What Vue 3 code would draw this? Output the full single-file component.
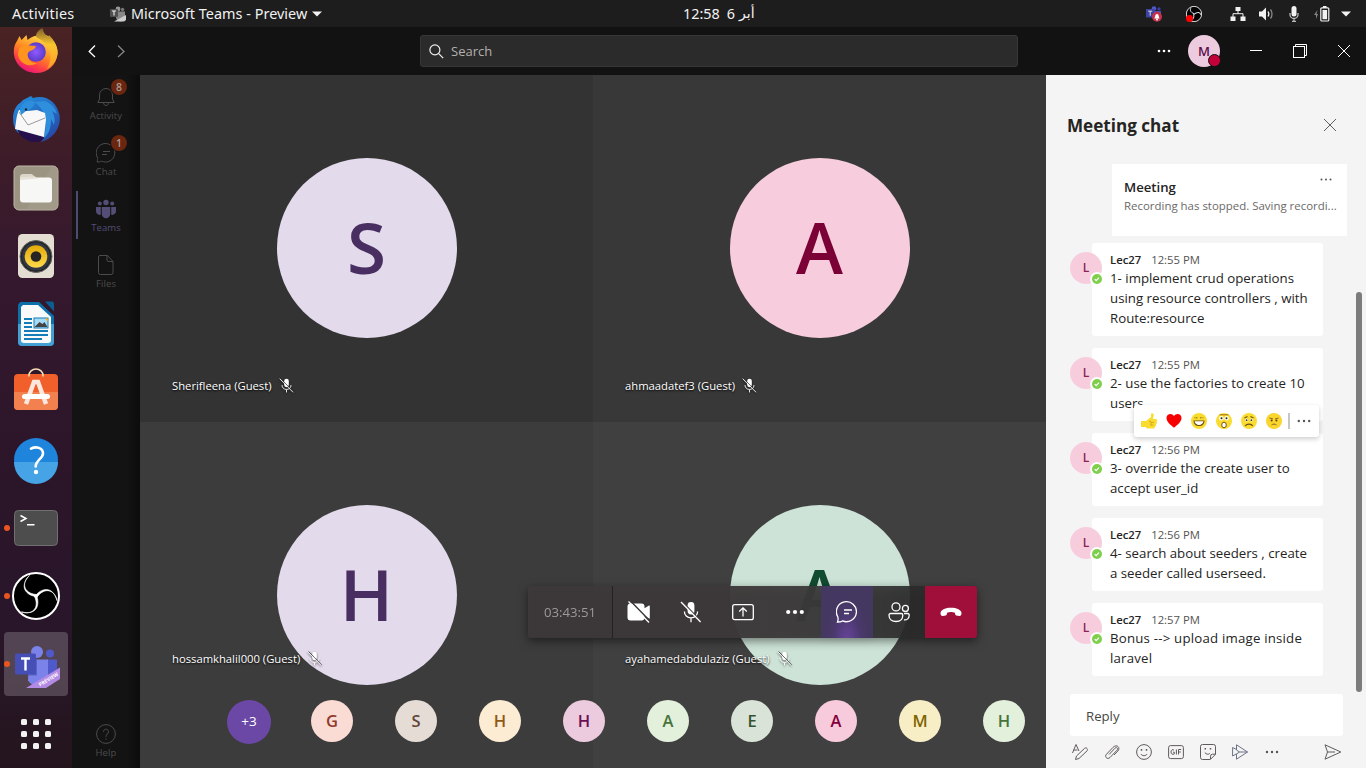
<script setup>
const tiles = [
  { letter: 'S', name: 'Sherifleena (Guest)', cls: 't1' },
  { letter: 'A', name: 'ahmaadatef3 (Guest)', cls: 't2' },
  { letter: 'H', name: 'hossamkhalil000 (Guest)', cls: 't3' },
  { letter: 'A', name: 'ayahamedabdulaziz (Guest)', cls: 't4' }
]
const others = [
  { l: 'G', bg: '#fbdcd4', fg: '#8e3a2b' },
  { l: 'S', bg: '#e6dcd6', fg: '#5f4438' },
  { l: 'H', bg: '#fcecd3', fg: '#8f5a14' },
  { l: 'H', bg: '#edcbdf', fg: '#6b0f52' },
  { l: 'A', bg: '#e2f0dc', fg: '#47733a' },
  { l: 'E', bg: '#d9e3d7', fg: '#35522f' },
  { l: 'A', bg: '#f7cbdc', fg: '#84003b' },
  { l: 'M', bg: '#f7eec6', fg: '#806400' },
  { l: 'H', bg: '#e2f0dc', fg: '#47733a' }
]
const messages = [
  { time: '12:55 PM', lines: ['1- implement crud operations', 'using resource controllers , with', 'Route:resource'] },
  { time: '12:55 PM', lines: ['2- use the factories to create 10', 'users'] },
  { time: '12:56 PM', lines: ['3- override the create user to', 'accept user_id'] },
  { time: '12:56 PM', lines: ['4- search about seeders , create', 'a seeder called userseed.'] },
  { time: '12:57 PM', lines: ['Bonus --> upload image inside', 'laravel'], wide: true }
]
</script>

<template>
  <div class="desktop">
    <svg class="defs" width="0" height="0">
      <defs>
        <symbol id="micoff" viewBox="0 0 22 22">
          <rect x="7.6" y="1" width="6.8" height="12.4" rx="3.4" fill="currentColor" />
          <path d="M4.4 10.4c0 3.7 2.8 6.4 6.6 6.4s6.6-2.7 6.6-6.4M11 17v4.2" fill="none" stroke="currentColor" stroke-width="1.3" />
          <path d="M2.3.8l19 19.6" stroke="#403d3e" stroke-width="1.3" class="cut" />
          <path d="M1 1l19.6 20" stroke="currentColor" stroke-width="1.3" />
        </symbol>
        <symbol id="obs" viewBox="0 0 48 48">
          <circle cx="24" cy="24" r="23" fill="#000" stroke="#ddd" stroke-width="3" />
          <g fill="none" stroke="#ddd" stroke-linecap="round" stroke-width="3">
            <path d="M15 6C10.800 10 12 19 24 23" />
            <path d="M15 6C10.800 10 12 19 24 23" transform="rotate(120 24 24)" />
            <path d="M15 6C10.800 10 12 19 24 23" transform="rotate(240 24 24)" />
          </g>
        </symbol>
      </defs>
    </svg>

    <header class="topbar">
      <span class="activities">Activities</span>
      <svg class="tray-app" width="16" height="16" viewBox="0 0 16 16">
        <circle cx="8" cy="3" r="2.4" fill="#999" /><circle cx="12.600" cy="3.500" r="1.700" fill="#777" />
        <path d="M6 5.500h9v5a4 4 0 0 1-9 1z" fill="#888" />
        <rect y="3" width="8" height="8" rx="1" fill="#505050" />
        <path d="M2 5h4M4 5v4.500" stroke="#eee" stroke-width="1.100" />
        <path d="M4 15.500L16 9v5l-2 1.500z" fill="#ccc" />
      </svg>
      <span class="appname">Microsoft Teams - Preview</span>
      <svg class="caret" width="10" height="6"><path d="M0 .5h10l-5 5z" fill="#f2f2f2" /></svg>
      <div class="clock"><span>12:58</span><span>6</span><span class="ar">أبر</span></div>
      <div class="tray">
        <svg width="16" height="16" viewBox="0 0 16 16">
          <circle cx="8" cy="2.600" r="2.300" fill="#5059c9" /><circle cx="13" cy="3" r="1.700" fill="#3a3f9e" />
          <path d="M5 5h10v8H7z" fill="#4a50b4" /><rect y="3" width="8.500" height="8.500" fill="#3d43a3" />
          <path d="M2.200 5.200h4M4.200 5.200v4.500" stroke="#ddd" />
          <circle cx="11" cy="10.800" r="5" fill="#c4314b" />
          <path d="M8.300 12.600c.9-1 .7-4.600 2.700-4.600s1.800 3.600 2.700 4.600z" fill="#fff" /><circle cx="11" cy="13.500" r="1" fill="#fff" />
        </svg>
        <span class="obs-small"><svg width="16" height="16"><use href="#obs" /></svg></span>
        <svg width="16" height="16" viewBox="0 0 16 16"><path d="M5.500 1h5v4h-5zM.5 10.500h5V15h-5zM10.500 10.500h5V15h-5z" fill="#f2f2f2" /><path d="M8 4v3.500M3 11V7.700h10V11" fill="none" stroke="#f2f2f2" /></svg>
        <svg width="16" height="16" viewBox="0 0 16 16"><path d="M1 5.500h3l4-4v13l-4-4H1z" fill="#f2f2f2" /><path d="M10 5.500c1 1.500 1 3.500 0 5" fill="none" stroke="#f2f2f2" stroke-width="1.300" /><path d="M12.500 3.500c2 2.500 2 6.500 0 9" fill="none" stroke="#888" stroke-width="1.300" /></svg>
        <svg width="16" height="16" viewBox="0 0 16 16"><rect x="5.500" y="0" width="5" height="10.500" rx="2.500" fill="#f2f2f2" /><path d="M4 7v1.500a4 4 0 0 0 8 0V7M8 12.500V16M6 15.500h4" fill="none" stroke="#bbb" stroke-width="1.300" /></svg>
        <svg width="16" height="16" viewBox="0 0 16 16"><path d="M3.500 4L0 9h2v4l2-5H2.500z" fill="#888" /><rect x="6.800" y="1.800" width="8" height="13.200" rx="1" fill="none" stroke="#f2f2f2" stroke-width="1.200" /><path d="M8.500 4h4.600v9.300H8.500zM9 0h3.500v2H9z" fill="#f2f2f2" /></svg>
        <svg width="10" height="6"><path d="M0 .5h10l-5 5z" fill="#f2f2f2" /></svg>
      </div>
    </header>

    <div class="below">
      <nav class="dock">
        <div class="slot">
          <svg width="48" height="48" viewBox="0 0 48 48">
            <defs>
              <linearGradient id="ff" x1=".8" y1=".1" x2=".3" y2="1"><stop offset="0" stop-color="#ffe14a" /><stop offset=".45" stop-color="#ff8a22" /><stop offset=".75" stop-color="#ff3f45" /><stop offset="1" stop-color="#e5127e" /></linearGradient>
              <linearGradient id="ffy" x1="0" y1="0" x2="0" y2="1"><stop offset="0" stop-color="#7a5c2c" /><stop offset=".4" stop-color="#f9c62e" /><stop offset="1" stop-color="#ff9d2a" /></linearGradient>
              <radialGradient id="ffp"><stop offset="0" stop-color="#9059ff" /><stop offset="1" stop-color="#5b3bc8" /></radialGradient>
            </defs>
            <path d="M5 14l2.500-5 2 4L14.500 8l1 5C20 9 30 6 36 9c7 5 10 11 9.500 17.500C44.500 38 36 46 24.500 46 12 46 2 37 1.800 25 1.700 20 3 17 5 14z" fill="url(#ff)" />
            <path d="M24 10c0-5 3-7 6.500-9 1 5 3 7 6 9l.5-2c5 5 9 12 8.600 19C44 35 40 39 35 42c4-7 5-15 2-21-2-4-6-7-13-11z" fill="url(#ffy)" />
            <circle cx="24" cy="25" r="9.800" fill="url(#ffp)" />
            <path d="M7 21c4-3 11-3 17-2-1 3-3 4-6 5-2 1-3 3-2 6 1 4 5 6 9 6-8 5-17 1-19-8z" fill="#ff941f" />
          </svg>
        </div>
        <div class="slot">
          <svg width="48" height="48" viewBox="0 0 48 48">
            <defs><linearGradient id="tb" x1=".2" y1="0" x2=".8" y2="1"><stop offset="0" stop-color="#248bdc" /><stop offset="1" stop-color="#2546a5" /></linearGradient></defs>
            <path d="M11 5L19 1l2 2C34-1 45 7 47.500 20c2 12-6 24-19 27l4-4-26-5C-1 31-1 14 8 8z" fill="url(#tb)" />
            <path d="M33 6c7 3 11 8 12 13l-5-3c3 6 3 9 2 14l-3-6c0 9-2 15-7 19 3-13 3-28-10-36z" fill="#2f8fdc" />
            <path d="M6 34l26 8-3 4C20 49 10 45 6 36z" fill="#25104e" />
            <path d="M7 15l9 1 9-1 8 3 1 7-2 17L3 34c1-5 1-13 4-19z" fill="#f8f8f8" />
            <path d="M7 17l9 13 17-7" fill="none" stroke="#9a9a9a" stroke-width="1" />
            <path d="M8 16c1-8 8-13 15-9-1 5-5 8-9 9l-5 4z" fill="#2d8fdb" /><circle cx="14" cy="14.500" r="1.200" fill="#123" />
          </svg>
        </div>
        <div class="slot">
          <svg width="48" height="48" viewBox="0 0 48 48">
            <rect x="2" y="2" width="44" height="44" rx="5" fill="#9c9482" stroke="#bdb7a8" />
            <path d="M40 2.500h2a4 4 0 0 1 4 4V42a4 4 0 0 1-4 4H14z" fill="#a8a08e" opacity=".5" />
            <path d="M8 13a3 3 0 0 1 3-3h9l4 4h-2v6H8z" fill="#d9d5c8" /><rect x="8" y="13.500" width="32" height="25" rx="3" fill="#f7f7f6" /><path d="M8 16v-3l15-.5 3 2z" fill="#e6e2d8" />
          </svg>
        </div>
        <div class="slot">
          <svg width="48" height="48" viewBox="0 0 48 48">
            <defs><linearGradient id="rb" x2="0" y2="1"><stop offset="0" stop-color="#e2aa08" /><stop offset="1" stop-color="#ffda4c" /></linearGradient></defs>
            <rect x="6" y="2" width="36" height="44" rx="4.500" fill="#e3ded1" /><circle cx="24" cy="24.500" r="16" fill="#242424" stroke="#666" /><circle cx="24" cy="24.500" r="12.500" fill="none" stroke="#313744" stroke-width="3" /><circle cx="24" cy="24.500" r="11.300" fill="url(#rb)" /><circle cx="24" cy="24.500" r="5.300" fill="#252525" />
          </svg>
        </div>
        <div class="slot">
          <svg width="48" height="48" viewBox="0 0 48 48">
            <path d="M11 2h16l15 14v26a4 4 0 0 1-4 4H10a4 4 0 0 1-4-4V6a4 4 0 0 1 5-4z" fill="#0d70a8" /><path d="M6 24h36v18a4 4 0 0 1-4 4H10a4 4 0 0 1-4-4z" fill="#44a0d2" />
            <path d="M33 1.500h7a2 2 0 0 1 2 2v8z" fill="#0b5e92" />
            <path d="M11 5h15l13 12v23a3 3 0 0 1-3 3H12a3 3 0 0 1-3-3V7z" fill="#fafafa" />
            <path d="M12 19h8M12 23h8M12 27h8M12 31h24M12 35h24M12 39h18" stroke="#137db8" stroke-width="1.900" />
            <rect x="22" y="18" width="14" height="10" fill="#a7dcf7" stroke="#137db8" /><path d="M22.500 27l5-5 3 2 2-2 3 5z" fill="#444" /><path d="M33 18.500h3v3z" fill="#f7ac11" />
          </svg>
        </div>
        <div class="slot">
          <svg width="48" height="48" viewBox="0 0 48 48">
            <rect x="2" y="6" width="44" height="36" rx="4" fill="#f1602a" /><path d="M2 24h44v14a4 4 0 0 1-4 4H6a4 4 0 0 1-4-4z" fill="#f3814f" />
            <path d="M17 8.500v-1a7 6.500 0 0 1 14 0v1" fill="none" stroke="#f1ddb3" stroke-width="1.600" />
            <path d="M14 36l8-22h4l8 22" fill="none" stroke="#fce7df" stroke-width="4.500" /><rect x="10" y="26" width="28" height="5" rx="2.500" fill="#fff" />
          </svg>
        </div>
        <div class="slot">
          <svg class="up" width="48" height="48" viewBox="0 0 48 48">
            <circle cx="24" cy="24" r="22" fill="#1f84dc" /><path d="M2 26a22 22 0 0 0 44 0z" fill="#46a3e6" />
            <path d="M19 12.700c5-2.600 12-1.200 12 4.800 0 5-7.300 6.500-7.300 13" fill="none" stroke="#fff" stroke-width="2.600" stroke-linecap="round" /><circle cx="24" cy="36" r="2.200" fill="#fff" />
          </svg>
        </div>
        <div class="slot run">
          <svg width="48" height="48" viewBox="0 0 48 48"><rect x="2.500" y="6.500" width="43" height="35" rx="4" fill="#4d4d4d" stroke="#707070" /><path d="M8.500 11.500l5.500 3-5.500 3M15 20.700h7.500" fill="none" stroke="#fff" stroke-width="1.500" /></svg>
        </div>
        <div class="slot run"><svg width="48" height="48" viewBox="0 0 48 48">
          <circle cx="24" cy="24" r="23" fill="#000" stroke="#fff" stroke-width="2" />
          <g v-for="a in [0, 120, 240]" :key="a" :transform="`rotate(${a} 24 24)`"><path d="M17.500 3.500C9.500 10 11 21 24 22.500L25.500 25C14 23.500 6.500 15 17.500 3.500z" fill="#fff" stroke="#fff" stroke-width=".6" /></g>
        </svg></div>
        <div class="slot run active">
          <svg width="48" height="48" viewBox="0 0 48 48">
            <circle cx="25" cy="9" r="6" fill="#7b83eb" /><circle cx="38" cy="10.500" r="4" fill="#5059c9" />
            <path d="M35 16.500h10v16a8 8 0 0 1-10 5z" fill="#5059c9" /><path d="M17 16.500h19v16a11 11 0 0 1-20 5z" fill="#7b83eb" />
            <path d="M17 16.500h8v16H16z" fill="#5962c9" />
            <rect x="3" y="10.500" width="21" height="21" rx="1.500" fill="#464fb5" />
            <path d="M9 15.500h9M13.500 15.500V27.500" stroke="#fff" stroke-width="2.400" />
            <path d="M14 45L48 24.500v11.500L34 45z" fill="#b48be4" />
            <text x="28" y="43.500" transform="rotate(-31 28 43.500)" class="pv">PREVIEW</text>
          </svg>
        </div>
        <div class="slot grid-slot">
          <svg width="32" height="32" viewBox="0 0 32 32" fill="#f2f2f2"><template v-for="r in 3" :key="r"><rect v-for="c in 3" :key="c" :x="c * 12 - 11" :y="r * 12 - 11" width="6" height="6" rx="1.500" /></template></svg>
        </div>
      </nav>

      <div class="app">
        <div class="titlebar">
          <svg class="arrows" width="40" height="14" viewBox="0 0 40 14" fill="none" stroke-width="1.300"><path d="M7 1.500L1.200 7.500 7 13" stroke="#fff" /><path d="M30 1.500l6 6-6 5.500" stroke="#858585" /></svg>
          <div class="search">
            <svg width="15" height="15" viewBox="0 0 15 15" fill="none" stroke="#f0f0f0" stroke-width="1.200"><circle cx="5.900" cy="5.900" r="5" /><path d="M9.700 9.700l4.500 4.500" /></svg>
            <span>Search</span>
          </div>
          <div class="win">
            <svg class="w-more" width="14" height="4" fill="#fff"><circle cx="2" cy="2" r="1.300" /><circle cx="7" cy="2" r="1.300" /><circle cx="12" cy="2" r="1.300" /></svg>
            <div class="me">M<i></i></div>
            <svg class="w-min" width="12" height="2"><path d="M0 .5h12" stroke="#fff" /></svg>
            <svg class="w-max" width="14" height="14" fill="none" stroke="#fff"><rect x=".5" y="2.500" width="11" height="11" /><path d="M2.500 2.500V.5h11v11h-2" /></svg>
            <svg class="w-x" width="12" height="12"><path d="M0 0l12 12M12 0L0 12" stroke="#fff" /></svg>
          </div>
        </div>

        <div class="main">
          <aside class="rail">
            <div class="ri">
              <svg width="20" height="20" viewBox="0 0 20 20" fill="none" stroke="currentColor"><path d="M3.500 8a6.500 6.500 0 0 1 13 0v4l1.700 3.500H1.800L3.500 12zM7.500 15.700c0 3.700 5 3.700 5 0" /></svg>
              <span>Activity</span><b>8</b>
            </div>
            <div class="ri">
              <svg width="20" height="20" viewBox="0 0 20 20" fill="none" stroke="currentColor"><path d="M1 19c.8-2 .8-3 .2-5A9.300 9.300 0 1 1 5.500 18.200C4 19 2.500 19 1 19zM7 8.500h7M6 11.500h5" /></svg>
              <span>Chat</span><b>1</b>
            </div>
            <div class="ri on">
              <svg width="20" height="20" viewBox="0 0 20 20" fill="currentColor"><circle cx="10" cy="3.500" r="2.700" /><circle cx="3.800" cy="4.500" r="2" /><circle cx="16.200" cy="4.500" r="2" /><path d="M5.800 8h8.400v7a4.200 4.200 0 0 1-8.400 0zM0 8h4.800v7.800C2 16.300 0 14.500 0 12zM20 8h-4.800v7.800c2.800.5 4.800-1.300 4.800-3.800z" /></svg>
              <span>Teams</span>
            </div>
            <div class="ri">
              <svg width="20" height="20" viewBox="0 0 20 20" fill="none" stroke="currentColor"><path d="M4 .5h7.500l5.500 6v11a2 2 0 0 1-2 2H4.500a2 2 0 0 1-2-2V2a1.500 1.500 0 0 1 1.500-1.500zM11 .5V5a1.500 1.500 0 0 0 1.500 1.500H17" /></svg>
              <span>Files</span>
            </div>
            <div class="ri help">
              <svg width="20" height="20" viewBox="0 0 20 20" fill="none" stroke="currentColor"><circle cx="10" cy="10" r="9.400" /><path d="M7.500 7.800c0-3.500 5-3.500 5 0 0 2-2.500 2.200-2.500 5M10 14.200v1.400" /></svg>
              <span>Help</span>
            </div>
          </aside>

          <section class="stage">
            <div v-for="t in tiles" :key="t.name" class="tile" :class="t.cls">
              <div class="big">{{ t.letter }}</div>
              <div class="who"><span>{{ t.name }}</span><svg width="15" height="15"><use href="#micoff" /></svg></div>
            </div>
            <div class="strip">
              <div class="more">+3</div>
              <div v-for="(o, i) in others" :key="i" class="small" :style="{ background: o.bg, color: o.fg }">{{ o.l }}</div>
            </div>
            <div class="callbar">
              <div class="timer">03:43:51</div>
              <div class="cb"><svg width="24" height="24" viewBox="0 0 24 24"><path d="M3.500 3.500h11a3 3 0 0 1 3 3v1.800L22 5.500c.5-.3.800 0 .8.500v12c0 .5-.3.800-.8.500l-4.500-2.800v1.800a3 3 0 0 1-3 3h-11a3 3 0 0 1-3-3v-11a3 3 0 0 1 3-3z" fill="#fff" /><path d="M3.200.8l20.500 21" stroke="#3d393a" stroke-width="1.500" /><path d="M1.500 1.500l20.500 21" stroke="#fff" stroke-width="1.300" /></svg></div>
              <div class="cb"><svg width="22" height="22"><use href="#micoff" /></svg></div>
              <div class="cb"><svg width="22" height="18" viewBox="0 0 22 18" fill="none" stroke="#fff" stroke-width="1.300"><rect x=".7" y="1.700" width="20.600" height="15" rx="2" /><path d="M11 13.500V5M7.200 8.500L11 4.800l3.800 3.700" /></svg></div>
              <div class="cb"><svg width="18" height="6" viewBox="0 0 18 6" fill="#fff"><circle cx="2.200" cy="3" r="2.100" /><circle cx="9" cy="3" r="2.100" /><circle cx="15.800" cy="3" r="2.100" /></svg></div>
              <div class="cb chat-on"><svg width="22" height="22" viewBox="-.5 0 22 22" fill="none" stroke="#fff" stroke-width="1.300"><path d="M1 21c.9-2 .9-3.300.2-5.400A10 10 0 1 1 6 19.900C4.500 21 2.500 21 1 21zM7.500 9h8M7.500 12.500h5" /></svg></div>
              <div class="cb"><svg width="22" height="21" viewBox="0 0 22 21" fill="none" stroke="#fff" stroke-width="1.300"><circle cx="8" cy="4.900" r="4" /><circle cx="17.400" cy="6.400" r="3" /><path d="M2.500 11.500h10.800a1.500 1.500 0 0 1 1.500 1.500c0 4.500-3 6.500-6.800 6.500S1 17.500 1 13a1.500 1.500 0 0 1 1.500-1.500zM16 11.500h3.800a1.400 1.400 0 0 1 1.400 1.500c0 3.500-2.200 5.200-5.300 4.900" /></svg></div>
              <div class="cb hang"><svg width="22" height="10" viewBox="0 0 22 10"><path d="M.6 5.200C1.500 2.500 5.500.7 11 .7s9.500 1.800 10.400 4.500c.5 2.700-.8 4-2.200 3.700l-2.800-.5c-1-.2-1.400-1.200-1.500-2.700-2-.8-5.800-.8-7.800 0-.1 1.500-.5 2.500-1.500 2.700l-2.800.5C1.400 9.200.1 7.900.6 5.200z" fill="#fff" /></svg></div>
            </div>
          </section>

          <section class="chat">
            <div class="chead"><h1>Meeting chat</h1><svg width="12" height="12"><path d="M0 0l12 12M12 0L0 12" stroke="#605e5c" /></svg></div>
            <div class="card">
              <div class="ctitle">Meeting</div>
              <svg class="cdots" width="12" height="3" fill="#555"><circle cx="1.500" cy="1.500" r="1" /><circle cx="6" cy="1.500" r="1" /><circle cx="10.500" cy="1.500" r="1" /></svg>
              <div class="csub">Recording has stopped. Saving recordi...</div>
            </div>
            <div class="msgs">
              <div v-for="(m, i) in messages" :key="i" class="msg">
                <div class="av">L<svg width="14" height="14" viewBox="0 0 14 14"><circle cx="7" cy="7" r="7" fill="#fff" /><circle cx="7" cy="7" r="5" fill="#7fcf4d" /><path d="M4.700 7.200l1.500 1.500 2.800-3" fill="none" stroke="#fff" stroke-width="1.200" /></svg></div>
                <div class="bubble" :class="{ wide: m.wide }">
                  <div class="meta"><b>Lec27</b><span>{{ m.time }}</span></div>
                  <div v-for="l in m.lines" :key="l" class="line">{{ l }}</div>
                </div>
                <div v-if="i === 1" class="react">
                  <svg width="16" height="16" viewBox="0 0 16 16"><path d="M0 8h5l5-4V1c1-1.500 3-.5 2.700 1.500L12 6h2.500c1.500 0 2 1.500 1 2.500 1 1 .5 2-.5 2.500.5 1 0 2-1 2.500 0 1.500-1 2-2 2H6L4.500 14H0z" fill="#f9dc2e" /><path d="M10 9.500h3M9.500 12h3M8 8l2 .5v4" fill="none" stroke="#d7aa1d" /></svg>
                  <svg width="16" height="16" viewBox="0 0 16 16"><path d="M8 14.800C4 11.500.5 8.500.5 5 .5.500 6-.5 8 3c2-3.500 7.500-2.500 7.500 2 0 3.500-3.500 6.500-7.500 9.800z" fill="#f90000" /></svg>
                  <svg width="16" height="16" viewBox="0 0 16 16"><circle cx="8" cy="8" r="8" fill="#f9dc2e" /><path d="M2.500 7.500h11c0 3.500-2 5.500-5.500 5.500s-5.500-2-5.500-5.500z" fill="#6b4c12" /><path d="M3.500 8.300h9c-.4 2-2 3.700-4.500 3.700s-4.100-1.700-4.500-3.700z" fill="#fff" /><path d="M3.500 4.800h3.400M9 4.800h3.400" stroke="#85641b" stroke-dasharray="1 .5" /></svg>
                  <svg width="16" height="16" viewBox="0 0 16 16"><circle cx="8" cy="8" r="8" fill="#f9dc2e" /><circle cx="5.300" cy="5.300" r="2.200" fill="#fff" /><circle cx="10.700" cy="5.300" r="2.200" fill="#fff" /><circle cx="5.500" cy="5.300" r="1" fill="#222" /><circle cx="10.500" cy="5.300" r="1" fill="#222" /><ellipse cx="8" cy="12" rx="2.300" ry="2.800" fill="#fff" stroke="#76531c" /><path d="M3.500 1.800h9" stroke="#9c6e20" /></svg>
                  <svg width="16" height="16" viewBox="0 0 16 16"><circle cx="8" cy="8" r="8" fill="#f9dc2e" /><circle cx="5.500" cy="7" r="1.500" fill="#fff" /><circle cx="10.500" cy="7" r="1.500" fill="#fff" /><circle cx="5.600" cy="7.200" r=".9" fill="#333" /><circle cx="10.400" cy="7.200" r=".9" fill="#333" /><path d="M3.500 5l3-1.500M12.500 5l-3-1.500M4 13c2-2.500 6-2.500 8 0" fill="none" stroke="#70501a" stroke-width="1.100" /></svg>
                  <svg width="16" height="16" viewBox="0 0 16 16"><circle cx="8" cy="8" r="8" fill="#f9d52e" /><path d="M3.500 5l3.500 1M12.500 5L9 6M5.500 12c1.500-1.200 3.500-1.200 5 0" fill="none" stroke="#8b641c" /><circle cx="5.600" cy="7.500" r="1" fill="#604414" /><circle cx="10.400" cy="7.500" r="1" fill="#604414" /></svg>
                  <i></i>
                  <svg class="rd" width="14" height="4" fill="#555"><circle cx="1.800" cy="2" r="1.200" /><circle cx="7" cy="2" r="1.200" /><circle cx="12.200" cy="2" r="1.200" /></svg>
                </div>
              </div>
            </div>
            <div class="scroll"></div>
            <div class="reply">Reply</div>
            <div class="tools">
              <svg width="16" height="16" viewBox="0 0 16 16"><path d="M.5 9L4 .5 7 7M1.500 6h4" /><path d="M15 4.500c1 1 .7 1.700 0 2.400L7 14.500l-3.500 1 1-3.500 8-7.600c.8-.7 1.600-.8 2.500.1z" /></svg>
              <svg width="16" height="16" viewBox="0 0 16 16"><path d="M5 10.500l6-6.300c1.600-1.600 3.600.3 2 2l-7 7.300c-2.500 2.500-6-.7-3.500-3.300L9 3.400c3.500-3.800 8 0 4.800 3.700L10 11" /></svg>
              <svg width="16" height="16" viewBox="0 0 16 16"><circle cx="8" cy="8" r="7.400" /><path d="M4.800 10c1.500 2.200 4.900 2.200 6.400 0" /><path d="M5.500 5v1.800M10.500 5v1.800" stroke-width="1.500" /></svg>
              <svg width="16" height="16" viewBox="0 0 16 16"><rect x=".6" y="1.600" width="14.800" height="13" rx="2" /><path d="M6 6.200c-1.500-1.300-3-.2-3 1.800s1.500 3 3.300 1.900V8.200H5M8.400 5.500v5M10.500 10.500v-5h2.700M10.500 8h2.300" /></svg>
              <svg width="16" height="16" viewBox="0 0 16 16"><path d="M2.500.5h11a2 2 0 0 1 2 2v7.800l-5.200 5.200H2.500a2 2 0 0 1-2-2v-11a2 2 0 0 1 2-2zM10.500 15v-2.800a2 2 0 0 1 2-2h3M4.800 8.500c1.500 2 3.500 2.200 5 1" /><path d="M5.300 4v1.500M10.500 4v1.500" stroke-width="1.500" /></svg>
              <svg class="blue" width="16" height="16" viewBox="0 0 16 16"><path d="M.6 3.500V12l4-2.200M.6 3.500l4 2M4.500.8L15.500 8l-11 7.200V10L7.500 8 4.500 6zM7.500 8h8" /></svg>
              <svg width="16" height="16" viewBox="0 0 16 16" class="dots"><circle cx="3" cy="8" r="1.200" /><circle cx="8" cy="8" r="1.200" /><circle cx="13" cy="8" r="1.200" /></svg>
              <svg class="send" width="18" height="16" viewBox="0 0 18 16"><path d="M1 .8L16.800 8 1 15.200 3.500 8zM3.500 8H11" /></svg>
            </div>
          </section>
        </div>
      </div>
    </div>
  </div>
</template>

<style>
body { margin: 0; overflow: hidden; background: #121212; }
</style>

<style scoped>
.desktop { width: 1366px; height: 768px; overflow: hidden; display: flex; flex-direction: column; font-family: "Open Sans", "Noto Sans", sans-serif; }
.desktop * { box-sizing: border-box; }
.defs { position: absolute; }
svg { display: block; flex: none; }
.topbar { height: 27px; flex: none; background: #1d1d1d; color: #f2f2f2; display: flex; align-items: center; font: 14.400px/27px "Noto Sans", sans-serif; position: relative; white-space: nowrap; }
.activities { margin-left: 12px; width: 98px; letter-spacing: .25px; }
.appname { margin-left: 5px; width: 177px; letter-spacing: .03px; }
.caret { margin-left: 4px; }
.clock { position: absolute; left: 683px; top: 0; display: flex; gap: 7px; }
.ar { font-family: "DejaVu Sans", sans-serif; font-size: 14px; margin-left: -3px; }
.tray { margin-left: auto; margin-right: 15px; display: flex; align-items: center; }
.tray svg { margin-left: 12px; }
.tray > svg:nth-child(1) { margin-left: 0; }
.obs-small { margin-left: 12px; position: relative; }
.obs-small svg { margin-left: 12px; }
.obs-small::after { content: ""; position: absolute; left: 12px; bottom: 0; width: 7px; height: 7px; border-radius: 50%; background: #f00; }
.tray > svg:nth-child(3) { margin-left: 28px; }
.tray > svg:nth-child(7) { margin-left: 11px; }
.below { display: flex; flex: 1; min-height: 0; }
.dock { width: 72px; overflow: hidden; background: linear-gradient(#4a2323, #3d1c29 18%, #35192e 32%, #2b1529 62%, #29162a 80%, #24151d); display: flex; flex-direction: column; }
.slot { height: 68px; flex: none; display: flex; align-items: center; justify-content: center; position: relative; }
.slot:first-child { height: 59px; align-items: flex-end; padding-bottom: 11px; }
.slot:nth-child(2) { padding-bottom: 2px; }
.up { margin-top: -1px; }
.run::before { content: ""; position: absolute; z-index: 2; left: 4px; top: 31px; width: 6px; height: 6px; border-radius: 50%; background: #e95420; }
.active::after { content: ""; position: absolute; inset: 2px 4px; border-radius: 4px; background: rgba(255, 255, 255, .2); }
.active svg { position: relative; z-index: 1; margin-top: 5px; }
.pv { font: 700 5px "Open Sans", sans-serif; fill: #fff; }
.grid-slot { padding-top: 3px; }
.app { flex: 1; display: flex; flex-direction: column; background: #121212; min-width: 0; }
.titlebar { height: 48px; flex: none; display: flex; align-items: center; }
.arrows { margin-left: 15.500px; margin-right: 292.500px; }
.search { width: 598px; height: 32px; border: 1px solid #373737; border-radius: 3px; background: #2b2b2b; display: flex; align-items: center; padding-left: 8px; gap: 7px; color: #b3b0ad; font-size: 13px; }
.win { display: flex; align-items: center; margin-left: 139px; }
.me { margin-left: 17px; width: 32px; height: 32px; border-radius: 50%; background: #edcbdf; color: #5c104a; font: 600 13px/32px "Open Sans", sans-serif; text-align: center; position: relative; }
.me i { position: absolute; right: -1px; bottom: 0; width: 13px; height: 13px; border: 1.500px solid #121212; border-radius: 50%; background: #c4003b; }
.w-min { margin-left: 30px; }
.w-max { margin-left: 31px; }
.w-x { margin-left: 31px; }
.main { flex: 1; display: flex; min-height: 0; }
.rail { width: 68px; display: flex; flex-direction: column; background: linear-gradient(90deg, #131313 80%, #0c0c0c); }
.ri { height: 56px; display: flex; flex-direction: column; align-items: center; padding-top: 12px; position: relative; color: #4c4c4c; font-size: 9.500px; letter-spacing: .1px; line-height: 14px; }
.ri span { margin-top: 1.500px; }
.ri b { position: absolute; left: 39px; top: 4px; width: 16px; height: 16px; border-radius: 50%; background: #6a260e; color: #a99c96; font: 600 10.500px/16px "Open Sans", sans-serif; text-align: center; box-shadow: 0 0 0 1px #121212; }
.ri.on { color: #544e76; }
.ri.on::before { content: ""; position: absolute; left: 4px; top: 4px; width: 2px; height: 48px; background: #504a70; }
.help { margin-top: auto; height: 57px; padding-top: 12px; margin-bottom: -1px; }
.stage { width: 906px; position: relative; display: grid; grid-template-columns: 453px 453px; grid-template-rows: 347px 346px; overflow: hidden; }
.tile { display: flex; align-items: flex-start; justify-content: center; position: relative; padding-top: 83px; }
.t1 { background: #333; }
.t2 { background: #383838; }
.t3 { background: #3c3c3c; }
.t4 { background: #404040; }
.big { width: 180px; height: 180px; border-radius: 50%; background: #e3daec; color: #492f61; font: 600 71px/177px "Open Sans", sans-serif; text-align: center; }
.t2 .big { background: #f7cddd; color: #7b0036; }
.t4 .big { background: #cde3d7; color: #114b30; }
.who { position: absolute; left: 32px; top: 302px; height: 16px; display: flex; align-items: center; gap: 7px; color: #fff; font-size: 11.250px; white-space: nowrap; text-shadow: 0 1px 2px #000; }
.who svg { filter: drop-shadow(0 1px 1px rgba(0, 0, 0, .6)); }
.t3 .who, .t4 .who { top: 228px; }
.strip { position: absolute; left: 87px; top: 625px; display: flex; gap: 42px; }
.more { width: 44px; height: 44px; margin-right: -2px; border-radius: 50%; background: #6b48a5; color: #fff; font-size: 13.500px; line-height: 43px; text-align: center; }
.small { width: 42px; height: 42px; border-radius: 50%; font: 600 16.500px/42px "Open Sans", sans-serif; text-align: center; }
.callbar { position: absolute; left: 388px; top: 511px; width: 449px; height: 52px; border-radius: 3px; overflow: hidden; display: flex; color: #fff; background: linear-gradient(90deg, rgba(61, 57, 58, .96) 50%, rgba(58, 57, 57, .94) 65%, rgba(43, 43, 43, .9) 85%); filter: drop-shadow(0 3px 5px rgba(0, 0, 0, .5)); }
.timer { width: 85px; border-right: 1px solid #222; color: #9b9897; font-size: 13.200px; line-height: 52px; text-align: center; }
.cb { width: 52px; display: flex; align-items: center; justify-content: center; }
.chat-on { background: radial-gradient(ellipse at 50% 110%, #6a44a0 0, rgba(80, 58, 120, .5) 38%, transparent 60%), #443760; }
.hang { background: #a00f39; }
.chat { width: 320px; background: #f4f4f4; position: relative; color: #252423; display: flex; flex-direction: column; }
.chead { height: 89px; padding: 38px 30px 0 21px; display: flex; justify-content: space-between; }
.chead svg { margin-top: 6px; }
h1 { margin: 0; font: 700 17.100px/26px "Open Sans", sans-serif; }
.card { width: 235px; height: 72px; margin-left: 66px; padding: 13px 0 0 12px; background: #fff; position: relative; white-space: nowrap; }
.ctitle { font-size: 13.200px; font-weight: 600; line-height: 20px; }
.cdots { position: absolute; right: 15px; top: 14px; }
.csub { font-size: 11.450px; line-height: 18px; color: #6b6967; }
.msgs { margin: 7px 43px 0 24px; display: flex; flex-direction: column; gap: 12px; }
.msg { position: relative; display: flex; }
.av { width: 32px; height: 32px; margin: 9px -10px 0 0; position: relative; z-index: 1; border-radius: 50%; background: #f7cddd; color: #8a2454; font: 600 12px/32px "Open Sans", sans-serif; text-align: center; }
.av svg { position: absolute; left: 20px; top: 20px; }
.bubble { width: 231px; background: #fff; border-radius: 3px; padding: 9px 0 8px 18px; }
.meta { height: 16px; line-height: 16px; font-size: 11.300px; display: flex; gap: 10px; white-space: nowrap; }
.meta b { font-weight: 600; }
.meta span { color: #555351; }
.line { height: 20px; line-height: 20px; font-size: 13.250px; white-space: nowrap; }
.wide .line { letter-spacing: .2px; }
.react { position: absolute; z-index: 2; left: 64px; top: 57px; width: 185px; height: 32px; display: flex; align-items: center; gap: 9px; padding-left: 7px; border-radius: 3px; background: #fff; box-shadow: 0 2px 5px rgba(0, 0, 0, .2); }
.react i { width: 2px; height: 16px; margin-left: -3px; background: #c8c6c4; }
.rd { margin-left: -2px; }
.scroll { position: absolute; left: 310px; top: 217px; width: 6px; height: 400px; border-radius: 3px; background: #7c7c7c; }
.reply { width: 273px; height: 42px; margin: 18px 0 0 24px; padding-left: 16px; border-radius: 3px; background: #fff; color: #494745; font-size: 13.200px; line-height: 44px; }
.tools { display: flex; gap: 16px; margin: 8px 24px 0 26px; fill: none; stroke: #5e5c5a; stroke-width: 1; }
.dots { fill: #555; stroke: none; }
.blue { stroke: #6c7186; }
.send { margin-left: auto; }
</style>
